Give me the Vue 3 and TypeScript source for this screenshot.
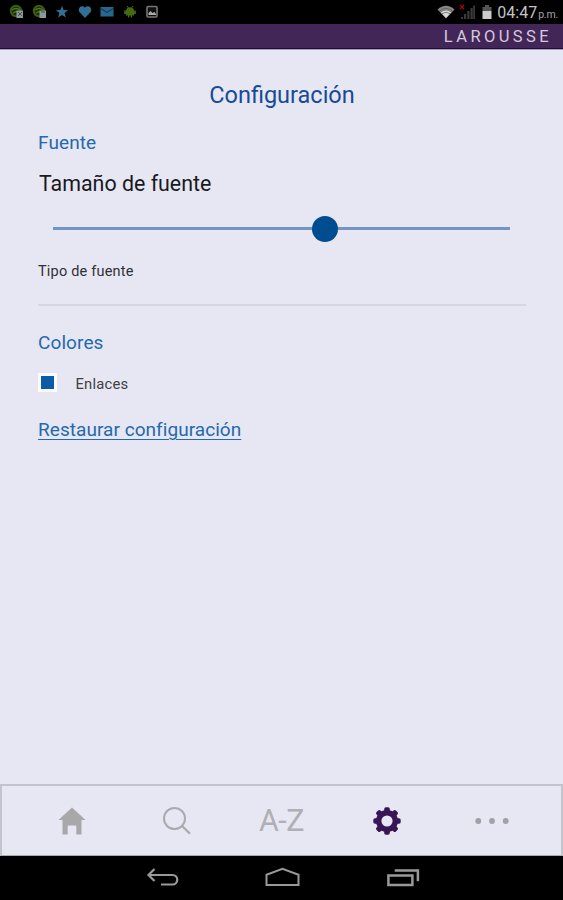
<script setup lang="ts">
import { ref } from 'vue'

const position = ref(59.5)
const teeth: number[] = [0, 45, 90, 135, 180, 225, 270, 315]
</script>

<template>
  <div class="screen">
    <header class="status">
      <div class="notices">
        <svg v-for="n in 2" :key="n" class="notice" viewBox="0 0 16 16">
          <circle cx="7" cy="7" r="5.2" fill="#1b2b08" stroke="#3c5c10" stroke-width="2" />
          <path d="M3 6q4-3 8 0M4 9q3-2 6-1" fill="none" stroke="#527b18" stroke-width="1.3" />
          <rect x="7.5" y="6.5" width="6.500" height="7.5" fill="#8a9c98" />
          <path v-if="n === 1" d="M9 8l4 4M9 12l4-4" stroke="#43534c" stroke-width="1" />
          <path v-else d="M9 8h4" stroke="#43534c" stroke-width="1" />
        </svg>
        <svg class="notice" viewBox="0 0 16 16"><path d="M8 1.8l1.6 4.3 4.5.2-3.5 2.8 1.3 4.5L8 11.1l-3.9 2.5 1.3-4.5L1.9 6.3l4.5-.2z" fill="#316f95" /></svg>
        <svg class="notice" viewBox="0 0 16 16"><path d="M8 14L2.600 8.200C-.200 4.800 4.600-.200 8 3.700c3.400-3.900 8.200 1.100 5.400 4.500z" fill="#316f95" /></svg>
        <svg class="notice" viewBox="0 0 16 16"><path d="M1.500 3h13v9.500h-13z" fill="#28678f" /><path d="M2 4.500l6 4 6-4" fill="none" stroke="#17415e" stroke-width="1.2" /></svg>
        <svg class="notice" viewBox="0 0 16 16"><path d="M4 7a4 3.800 0 0 1 8 0zM4 7h8v4.500h-2v2H8.700v-2H7.300v2H6v-2H4zM2.200 6.500h1.800v3.500H2.200zM12 6.500h1.800v3.500H12z" fill="#44690f" /><path d="M5 2l1.500 2M11 2L9.500 4" stroke="#44690f" /></svg>
        <svg class="notice" viewBox="0 0 16 16"><rect x="3" y="2.500" width="10" height="10.500" rx="1" fill="#111" stroke="#777" stroke-width="1.600" /><path d="M4.500 11V9l2-2 2 2 2-1 1.500 2v1z" fill="#aaa" /></svg>
      </div>
      <div class="device">
        <svg class="wifi" viewBox="0 0 18 14"><path d="M.5 4.500Q9-3 17.500 4.500L9 13.500z" fill="#868686" /><path d="M4 7.500q5-4 10 0l-5 5.500z" fill="#d8d8d8" /><path d="M2.500 6q6.500-5 13 0M5 8.700q4-3 8 0" stroke="#555" stroke-width=".7" fill="none" /></svg>
        <svg class="signal" viewBox="0 0 17 16"><path d="M2 15v-2h2v2zM5 15v-5h2.200v5zM8.300 15V7h2.200v8zM11.500 15V4h2.200v11zM14.300 15V1.500h1.700V15z" fill="#3b3b3b" /><path d="M1 1l4 4M5 1L1 5" stroke="#b30010" stroke-width="1.300" /></svg>
        <svg class="battery" viewBox="0 0 10 16"><path d="M3 1h4v2h2.500v4h-9V3H3z" fill="#555" /><path d="M.5 7h9v8h-9z" fill="#ccc" /></svg>
        <span class="clock">04:47</span><span class="meridiem">p.m.</span>
      </div>
    </header>
    <div class="brand"><span>LAROUSSE</span></div>

    <main class="content">
      <h1>Configuración</h1>
      <h2 class="font-title">Fuente</h2>
      <p class="size-label">Tamaño de fuente</p>
      <div class="slider">
        <div class="thumb" :style="{ left: position + '%' }"></div>
      </div>
      <p class="type-label">Tipo de fuente</p>
      <div class="rule"></div>
      <h2 class="color-title">Colores</h2>
      <div class="links"><span class="swatch"></span><span class="links-label">Enlaces</span></div>
      <a class="restore">Restaurar configuración</a>
    </main>

    <nav class="tabs">
      <div class="tab">
        <svg width="30" height="30" viewBox="0 0 30 30"><path d="M15 1.500L28.500 14H24.500V28.500H19.300V19.500H10.700V28.500H5.500V14H1.500z" fill="#a8a8aa" /></svg>
      </div>
      <div class="tab">
        <svg width="30" height="30" viewBox="0 0 30 30" fill="none" stroke="#a9a9ae"><circle cx="12.500" cy="12.500" r="10.500" stroke-width="2" /><path d="M19.800 19.800l8.200 8" stroke-width="2.300" /></svg>
      </div>
      <div class="tab"><span class="az">A-Z</span></div>
      <div class="tab">
        <svg width="30" height="30" viewBox="-15 -15 30 30" fill="#391556">
          <rect v-for="a in teeth" :key="a" x="-2.800" y="-13.700" width="5.600" height="7" rx="1.700" :transform="`rotate(${a})`" />
          <circle r="8.300" fill="none" stroke="#391556" stroke-width="5.400" />
        </svg>
      </div>
      <div class="tab">
        <svg width="36" height="30" viewBox="0 0 36 30" fill="#a0a0a5"><circle cx="4.300" cy="15" r="2.900" /><circle cx="18" cy="15" r="2.900" /><circle cx="31.700" cy="15" r="2.900" /></svg>
      </div>
    </nav>

    <footer class="system">
      <svg width="36" height="24" viewBox="0 0 36 24" fill="none" stroke="#999"><path d="M4 9H28.500a4.500 4.500 0 0 1 0 9.500H17" stroke-width="2.200" /><path d="M10.500 3L4.500 9l6 6" stroke-width="2.200" /></svg>
      <svg width="36" height="24" viewBox="0 0 36 24" fill="none" stroke="#999" stroke-width="2"><path d="M2.500 19V8.800L18.500 2.800l16 6V19z" /></svg>
      <svg width="36" height="24" viewBox="0 0 36 24" fill="none" stroke="#999" stroke-width="2.500"><path d="M4.400 9.500h24V19h-24zM10.700 4.500h23.200v10.800" /></svg>
    </footer>
  </div>
</template>

<style>
body {
  margin: 0;
}
</style>

<style scoped>
.screen {
  width: 563px;
  height: 900px;
  display: flex;
  flex-direction: column;
  overflow: hidden;
  background: #e7e7f3;
  font-family: Roboto, "Liberation Sans", sans-serif;
}
h1, h2, p {
  margin: 0;
  font-weight: 400;
}
svg {
  display: block;
  flex: none;
}
.status {
  box-sizing: border-box;
  height: 24px;
  display: flex;
  justify-content: space-between;
  align-items: center;
  padding: 0 5px 0 9px;
  background: #000;
}
.notices {
  display: flex;
  gap: 6.500px;
}
.notice {
  width: 16px;
  height: 16px;
}
.device {
  display: flex;
  align-items: center;
}
.wifi {
  width: 18px;
  height: 14px;
  margin-right: 4px;
}
.signal {
  width: 17px;
  height: 16px;
  margin-right: 6px;
}
.battery {
  width: 10px;
  height: 16px;
  margin-right: 5px;
}
.clock {
  padding-top: 2px;
  font-size: 16px;
  line-height: 24px;
  color: #c4c4c4;
}
.meridiem {
  margin: 5px 0 0 1px;
  font-size: 10.500px;
  letter-spacing: -0.200px;
  color: #a6a6a6;
}
.brand {
  box-sizing: border-box;
  height: 26px;
  padding-right: 9px;
  text-align: right;
  background: #432658;
  border-bottom: 1px solid #a69bb8;
  box-shadow: inset 0 -1px #230a3c;
  color: #d4c9dc;
  font-size: 16.500px;
  line-height: 26px;
  letter-spacing: 3.400px;
}
.brand span {
  margin-right: 2px;
}
.content {
  flex: 1;
  display: flex;
  flex-direction: column;
  align-items: flex-start;
  padding: 31px 37px 0 38px;
}
h1 {
  align-self: center;
  font-size: 23.500px;
  line-height: 28px;
  color: #174b97;
}
h2 {
  font-size: 19px;
  line-height: 24px;
  letter-spacing: 0.100px;
  color: #2469ac;
}
.font-title {
  margin-top: 22px;
}
.size-label {
  margin-top: 16px;
  padding-left: 1px;
  font-size: 21.400px;
  line-height: 26px;
  color: #19191e;
}
.slider {
  position: relative;
  width: 457px;
  height: 3px;
  margin: 30px 0 0 15px;
  background: #7494c4;
}
.thumb {
  position: absolute;
  top: 50%;
  width: 26px;
  height: 26px;
  border-radius: 50%;
  background: #004c90;
  transform: translate(-50%, -50%);
}
.type-label {
  margin-top: 32px;
  font-size: 14.500px;
  line-height: 20px;
  letter-spacing: 0.200px;
  color: #303036;
}
.rule {
  width: 488px;
  height: 2px;
  margin-top: 22px;
  background: #d6d6e1;
}
.color-title {
  margin-top: 25px;
}
.links {
  display: flex;
  align-items: center;
  height: 19px;
  margin-top: 18px;
}
.swatch {
  box-sizing: border-box;
  width: 19px;
  height: 19px;
  border: 3px solid #fcfcff;
  background: #0a5ba8;
}
.links-label {
  padding-top: 2px;
  margin-left: 18.500px;
  font-size: 14.800px;
  line-height: 20px;
  letter-spacing: 0.200px;
  color: #404046;
}
.restore {
  margin-top: 26px;
  font-size: 19px;
  line-height: 24px;
  letter-spacing: 0.050px;
  color: #2469ac;
  text-decoration: underline;
  text-decoration-thickness: 1px;
  text-underline-offset: 3px;
}
.tabs {
  box-sizing: border-box;
  height: 72px;
  display: grid;
  grid-template-columns: repeat(5, 105px);
  justify-content: center;
  border: 2px solid #c3c3ce;
  border-bottom: 1px solid #a9a9b0;
}
.tab {
  display: flex;
  align-items: center;
  justify-content: center;
}
.az {
  font-size: 30.500px;
  line-height: 30px;
  letter-spacing: -0.500px;
  color: #afafb4;
}
.system {
  height: 44px;
  display: flex;
  align-items: center;
  justify-content: center;
  gap: 84px;
  background: #000;
}
</style>
